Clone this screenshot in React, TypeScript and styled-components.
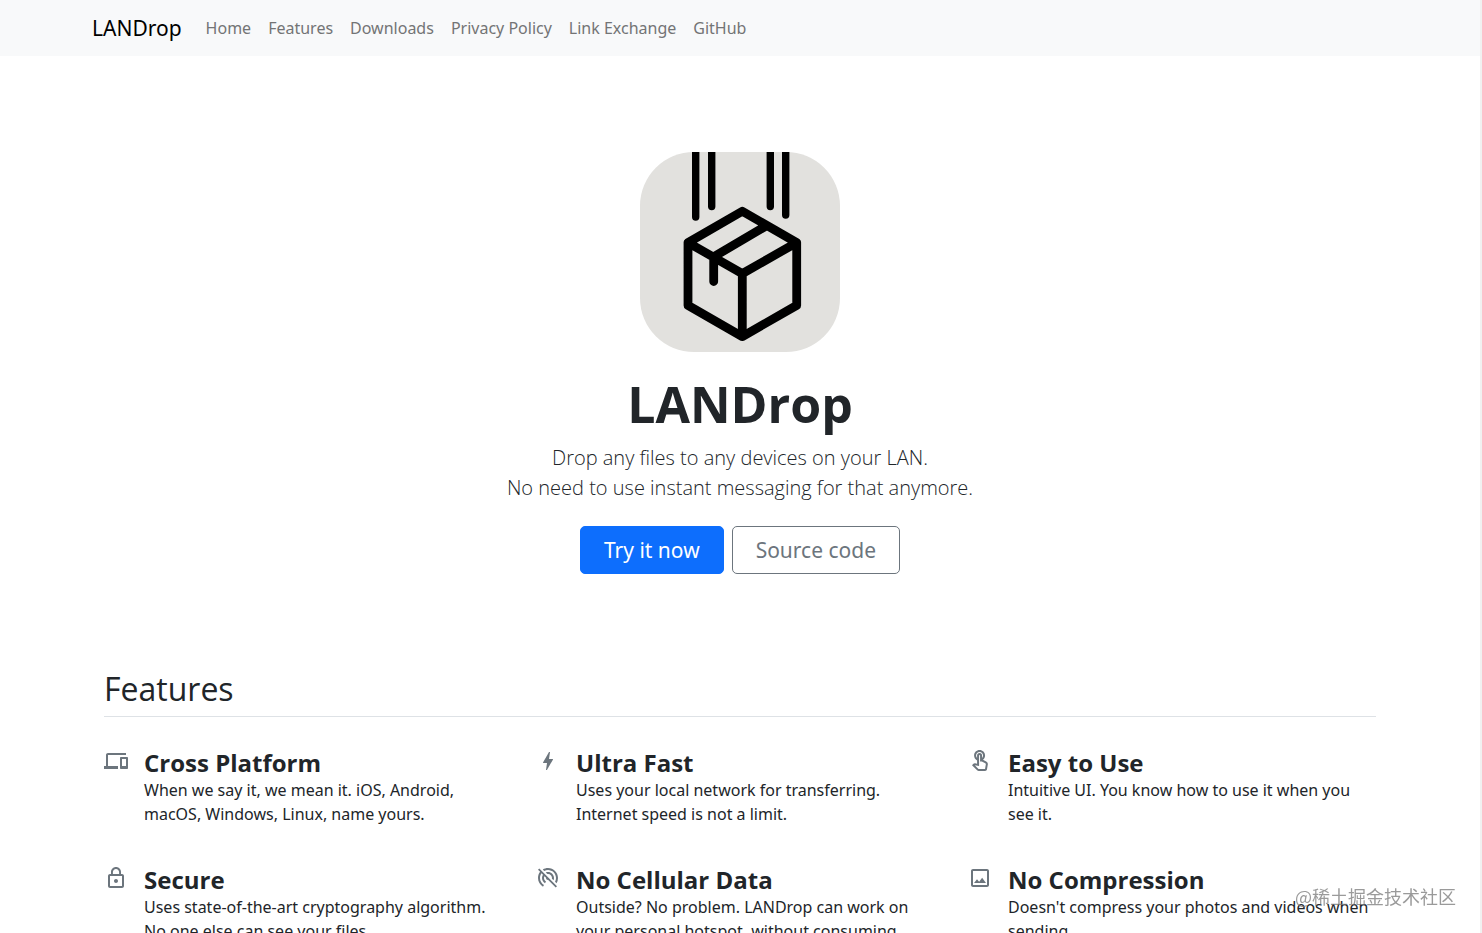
import React from "react";
import styled, { createGlobalStyle } from "styled-components";
import type { IconType } from "react-icons";
import {
  MdBolt,
  MdDevices,
  MdLockOutline,
  MdOutlineImage,
  MdOutlineTouchApp,
  MdPortableWifiOff,
} from "react-icons/md";

const GlobalStyle = createGlobalStyle`
  *, *::before, *::after { box-sizing: border-box; }
  body {
    margin: 0;
    background: #fff;
    color: #212529;
    font-family: "Noto Sans", "Open Sans", "Noto Sans CJK SC", sans-serif;
    font-size: 16px;
    line-height: 24px;
  }
  h1, h2, h3, p, ul { margin: 0; padding: 0; }
`;

const displayFont = `"Open Sans", "Noto Sans", sans-serif`;

const Page = styled.div`
  min-height: 100vh;
  border-right: 2px solid #f1f1f1;
`;

const Header = styled.header`
  background: #f8f9fa;
`;

const Container = styled.div<{ $gutter: number }>`
  width: 100%;
  max-width: 1320px;
  margin: 0 auto;
  padding: 0 ${(p) => p.$gutter}px;
`;

const NavBar = styled.nav`
  display: flex;
  align-items: center;
  height: 56px;
`;

const Brand = styled.a`
  margin-right: 16px;
  color: #000;
  font-size: 21px;
  line-height: 30px;
  text-decoration: none;
`;

const NavList = styled.ul`
  display: flex;
  gap: 1px;
  list-style: none;
`;

const NavLink = styled.a`
  display: block;
  padding: 8px;
  color: #737475;
  text-decoration: none;
  white-space: nowrap;
`;

const Hero = styled.section`
  display: flex;
  flex-direction: column;
  align-items: center;
  padding: 96px 24px;
  text-align: center;
`;

const Logo = styled.svg`
  display: block;
  width: 200px;
  height: 200px;
  margin-bottom: 24px;
`;

const HeroTitle = styled.h1`
  margin-bottom: 11px;
  font-family: ${displayFont};
  font-size: 50px;
  font-weight: 700;
  line-height: 56px;
`;

const Lead = styled.p`
  margin-bottom: 23px;
  font-family: ${displayFont};
  font-size: 20px;
  font-weight: 300;
  line-height: 30px;
`;

const Actions = styled.div`
  display: flex;
  gap: 8px;
`;

const Button = styled.button<{ $primary?: boolean }>`
  height: 48px;
  padding: 0 23px;
  border: 1px solid ${(p) => (p.$primary ? "#0d6efd" : "#6c757d")};
  border-radius: 5px;
  background: ${(p) => (p.$primary ? "#0d6efd" : "transparent")};
  color: ${(p) => (p.$primary ? "#fff" : "#6c757d")};
  font-family: inherit;
  font-size: 21px;
  line-height: 30px;
  cursor: pointer;
`;

const SectionTitle = styled.h2`
  padding-bottom: 8px;
  border-bottom: 1px solid #dee2e6;
  font-family: ${displayFont};
  font-size: 32px;
  font-weight: 400;
  line-height: 38px;
`;

const FeatureGrid = styled.div`
  display: grid;
  grid-template-columns: repeat(3, 1fr);
  gap: 40px 24px;
  padding: 32px 0 48px;
`;

const FeatureItem = styled.article`
  display: flex;
  align-items: flex-start;
  gap: 16px;
  padding-right: 4px;
`;

const FeatureIcon = styled.span`
  display: flex;
  flex: none;
  color: #6c757d;
`;

const FeatureTitle = styled.h3`
  margin-bottom: 2px;
  font-family: ${displayFont};
  font-size: 24px;
  font-weight: 700;
  line-height: 27px;
`;

const Watermark = styled.div`
  position: fixed;
  right: 26px;
  bottom: 25px;
  color: rgba(120, 120, 120, 0.75);
  font-family: "Noto Sans CJK SC", sans-serif;
  font-size: 18px;
  line-height: 24px;
  pointer-events: none;
`;

const links = ["Home", "Features", "Downloads", "Privacy Policy", "Link Exchange", "GitHub"];

const features: { icon: IconType; title: string; text: string }[] = [
  {
    icon: MdDevices,
    title: "Cross Platform",
    text: "When we say it, we mean it. iOS, Android, macOS, Windows, Linux, name yours.",
  },
  {
    icon: MdBolt,
    title: "Ultra Fast",
    text: "Uses your local network for transferring. Internet speed is not a limit.",
  },
  {
    icon: MdOutlineTouchApp,
    title: "Easy to Use",
    text: "Intuitive UI. You know how to use it when you see it.",
  },
  {
    icon: MdLockOutline,
    title: "Secure",
    text: "Uses state-of-the-art cryptography algorithm. No one else can see your files.",
  },
  {
    icon: MdPortableWifiOff,
    title: "No Cellular Data",
    text: "Outside? No problem. LANDrop can work on your personal hotspot, without consuming cellular data.",
  },
  {
    icon: MdOutlineImage,
    title: "No Compression",
    text: "Doesn't compress your photos and videos when sending.",
  },
];

function LogoMark() {
  return (
    <Logo viewBox="0 0 200 200" role="img" aria-label="LANDrop logo">
      <rect width="200" height="200" rx="54" fill="#e2e1de" />
      <g fill="none" stroke="#000" strokeLinecap="round" strokeLinejoin="round">
        <path strokeWidth="7.4" d="M55.7 -8V65M71.7 -8V54.5M130.3 -8V54.5M145.7 -8V63" />
        <path
          strokeWidth="8.8"
          d="M102.3 59.2L156.7 90.6V153.4L102.3 184.6L48 153.4V90.6ZM48 90.6L102.3 121.6L156.7 90.6M102.3 121.6V184.6M126.7 73.6L73.7 104.8V129.5"
        />
      </g>
    </Logo>
  );
}

export default function App() {
  return (
    <>
      <GlobalStyle />
      <Page>
        <Header>
          <Container $gutter={12}>
            <NavBar>
              <Brand href="#">LANDrop</Brand>
              <NavList>
                {links.map((label) => (
                  <li key={label}>
                    <NavLink href="#">{label}</NavLink>
                  </li>
                ))}
              </NavList>
            </NavBar>
          </Container>
        </Header>
        <main>
          <Hero>
            <LogoMark />
            <HeroTitle>LANDrop</HeroTitle>
            <Lead>
              Drop any files to any devices on your LAN.
              <br />
              No need to use instant messaging for that anymore.
            </Lead>
            <Actions>
              <Button $primary>Try it now</Button>
              <Button>Source code</Button>
            </Actions>
          </Hero>
          <Container $gutter={24}>
            <SectionTitle>Features</SectionTitle>
            <FeatureGrid>
              {features.map(({ icon: Icon, title, text }) => (
                <FeatureItem key={title}>
                  <FeatureIcon>
                    <Icon size={24} />
                  </FeatureIcon>
                  <div>
                    <FeatureTitle>{title}</FeatureTitle>
                    <p>{text}</p>
                  </div>
                </FeatureItem>
              ))}
            </FeatureGrid>
          </Container>
        </main>
        <Watermark>@稀土掘金技术社区</Watermark>
      </Page>
    </>
  );
}
